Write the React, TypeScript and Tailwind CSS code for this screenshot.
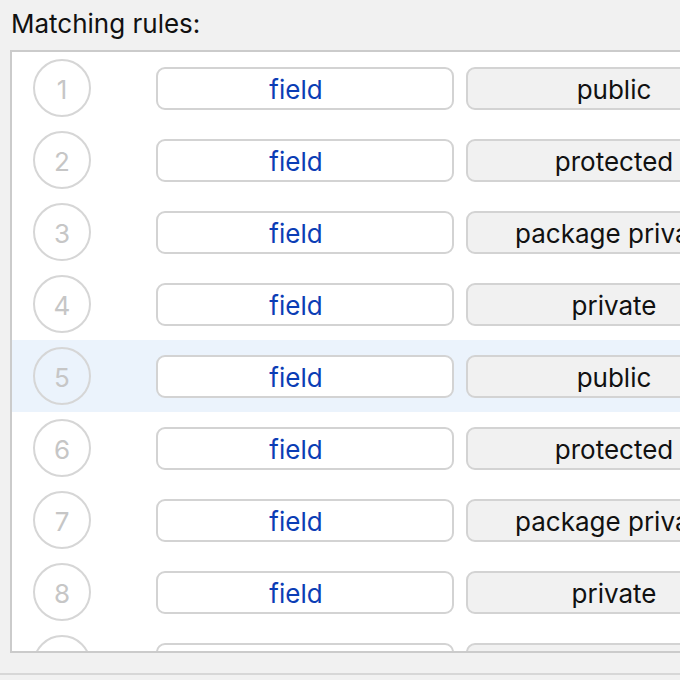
const rules = [
  { n: 1, type: 'field', access: 'public' },
  { n: 2, type: 'field', access: 'protected' },
  { n: 3, type: 'field', access: 'package private' },
  { n: 4, type: 'field', access: 'private' },
  { n: 5, type: 'field', access: 'public' },
  { n: 6, type: 'field', access: 'protected' },
  { n: 7, type: 'field', access: 'package private' },
  { n: 8, type: 'field', access: 'private' },
  { n: 9, type: 'field', access: 'public' },
]

function RuleRow({ n, type, access, selected }: { n: number; type: string; access: string; selected: boolean }) {
  return (
    <div className={`flex h-[72px] shrink-0 items-center ${selected ? 'bg-[#ebf3fc]' : ''}`}>
      <div className="ml-[21px] flex size-[58px] shrink-0 items-center justify-center rounded-full border-2 border-[#d6d6d6] pt-[2px] text-[26px] text-[#c6c6c6]">
        {n}
      </div>
      <div className="ml-[65px] flex h-[43px] w-[298px] shrink-0 items-center justify-center rounded-[9px] border-2 border-[#d3d3d3] bg-white pr-[18px] pt-[2px] text-[26px] text-[#0b3db5]">
        {type}
      </div>
      <div className="ml-[12px] flex h-[43px] w-[296px] shrink-0 items-center justify-center whitespace-nowrap rounded-[9px] border-2 border-[#d3d3d3] bg-[#f1f1f1] pt-[2px] text-[26px] text-[#111111]">
        {access}
      </div>
    </div>
  )
}

export default function App() {
  return (
    <div
      className="flex h-[680px] w-[680px] flex-col overflow-hidden bg-[#f1f1f1]"
      style={{ fontFamily: 'Inter, "Noto Sans", sans-serif' }}
    >
      <div className="pl-[11px] pt-[8px] text-[26px] leading-[32px] text-[#111111]">Matching rules:</div>
      <div className="ml-[10px] mt-[10px] flex h-[603px] w-[720px] shrink-0 flex-col overflow-hidden border-2 border-[#cbcbcb] bg-white">
        {rules.map((r) => (
          <RuleRow key={r.n} {...r} selected={r.n === 5} />
        ))}
      </div>
      <div className="mt-[20px] h-[2px] w-full bg-[#d7d7d7]" />
    </div>
  )
}
